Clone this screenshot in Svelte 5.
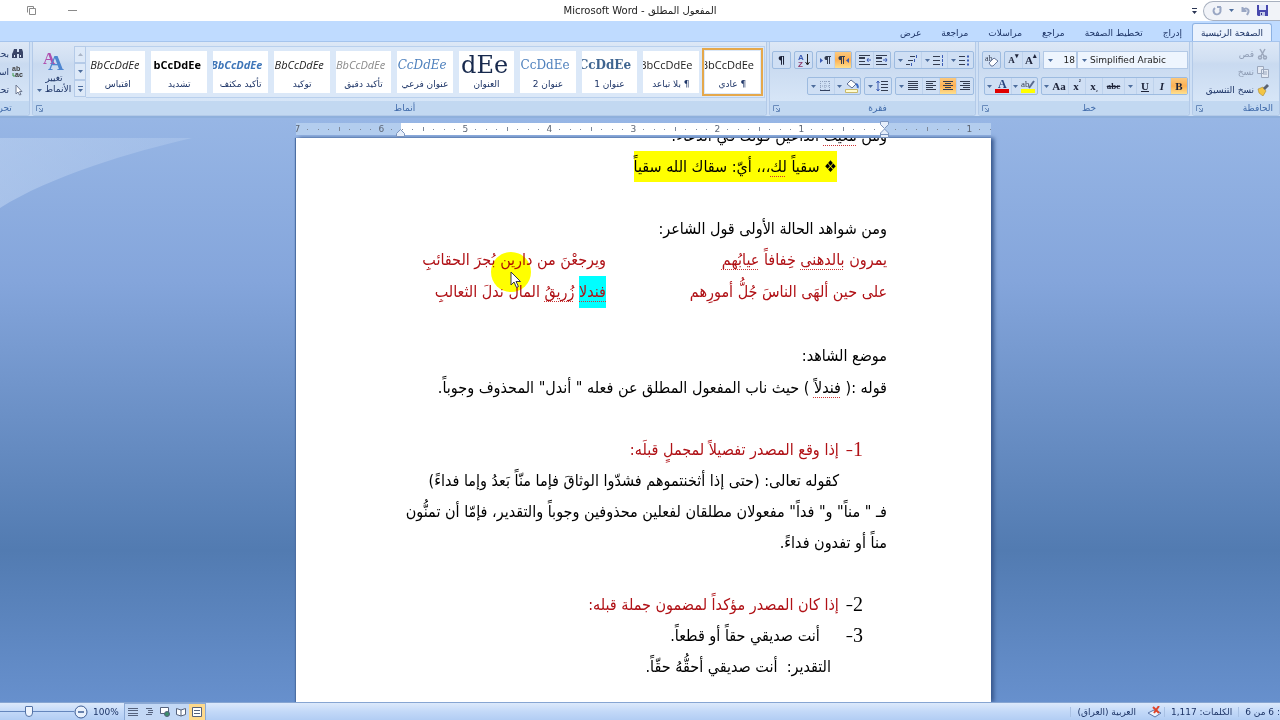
<script lang="ts">
  type StyleCard = { preview: string; label: string; kind: string };

  const tabs = ['الصفحة الرئيسية', 'إدراج', 'تخطيط الصفحة', 'مراجع', 'مراسلات', 'مراجعة', 'عرض'];

  const styleCards: StyleCard[] = [
    { preview: 'BbCcDdEe', label: '¶ عادي', kind: 'plain' },
    { preview: 'BbCcDdEe', label: '¶ بلا تباعد', kind: 'plain' },
    { preview: 'CcDdEe', label: 'عنوان 1', kind: 'heading1' },
    { preview: 'CcDdEe', label: 'عنوان 2', kind: 'heading2' },
    { preview: 'dEe', label: 'العنوان', kind: 'title' },
    { preview: 'CcDdEe', label: 'عنوان فرعي', kind: 'subtitle' },
    { preview: 'BbCcDdEe', label: 'تأكيد دقيق', kind: 'subtle' },
    { preview: 'BbCcDdEe', label: 'توكيد', kind: 'emphasis' },
    { preview: 'BbCcDdEe', label: 'تأكيد مكثف', kind: 'intense' },
    { preview: 'bCcDdEe', label: 'تشديد', kind: 'strong' },
    { preview: 'BbCcDdEe', label: 'اقتباس', kind: 'emphasis' },
  ];

  const rulerMarks = ['1', '', '1', '2', '3', '4', '5', '6', '7'];

  let activeTab = $state(0);
  let activeStyle = $state(0);
  let zoom = $state(38);
</script>

<svelte:head>
  <title>المفعول المطلق - Microsoft Word</title>
</svelte:head>

{#snippet arrow()}
  <svg class="arrow" width="5" height="3" viewBox="0 0 5 3"><path d="M0 0h5L2.500 3z" fill="#4c6c9c" /></svg>
{/snippet}

{#snippet launcher()}
  <button class="launcher" aria-label="المزيد من الخيارات">
    <svg width="7" height="7" viewBox="0 0 7 7" fill="none" stroke="#6a8cbc">
      <path d="M.5 6V.5H6M3 3l3 3M6.500 3v3.500H3" />
    </svg>
  </button>
{/snippet}

{#snippet lines(kind: string)}
  <svg width="12" height="12" viewBox="0 0 12 12" stroke="#333c50" fill="none">
    {#if kind === 'right'}
      <path d="M1 1.500h10M4 3.500h7M1 5.500h10M4 7.500h7M1 9.500h10" />
    {:else if kind === 'center'}
      <path d="M1 1.500h10M3 3.500h6M1 5.500h10M3 7.500h6M1 9.500h10" />
    {:else if kind === 'left'}
      <path d="M1 1.500h10M1 3.500h7M1 5.500h10M1 7.500h7M1 9.500h10" />
    {:else if kind === 'justify'}
      <path d="M1 1.500h10M1 3.500h10M1 5.500h10M1 7.500h10M1 9.500h10" />
    {:else if kind === 'bullets'}
      <path d="M0 2.500h6M0 6.500h6M0 10.500h6" /><path d="M8 2.500h2M8 6.500h2M8 10.500h2" stroke="#3b5bb5" stroke-width="2" />
    {:else if kind === 'numbers'}
      <path d="M0 2.500h7M0 6.500h7M0 10.500h7" /><path d="M9.500 1v3M9.500 5v3M9.500 9v3" stroke="#3b5bb5" />
    {:else if kind === 'levels'}
      <path d="M4 2.500h5M2 6.500h5M0 10.500h4" /><path d="M10.500 1v3M8.500 5v3M5.500 9v3" stroke="#3b5bb5" />
    {:else if kind === 'indent'}
      <path d="M0 1.500h11M0 4.500h6M0 7.500h6M0 10.500h11M0 3.500h6" /><path d="M12 6H8M9.500 4L8 6l1.500 2" stroke="#3b5bb5" />
    {:else if kind === 'outdent'}
      <path d="M0 1.500h11M0 4.500h6M0 7.500h6M0 10.500h11M0 3.500h6" /><path d="M7 6h4M9.500 4L11 6 9.500 8" stroke="#3b5bb5" />
    {:else}
      <path d="M5 1.500h7M5 4.500h7M5 7.500h7M5 10.500h7" /><path d="M2 1v10M.5 3L2 1l1.500 2M.5 9L2 11l1.500-2" stroke="#3b5bb5" />
    {/if}
  </svg>
{/snippet}

<div class="window" dir="rtl">
  <!-- شريط العنوان -->
  <header class="titlebar">
    <div class="quick">
      <div class="pill">
        <button aria-label="حفظ">
          <svg width="11" height="11" viewBox="0 0 11 11"><path d="M0 0h11v11H1L0 10z" fill="#4747ad" /><path d="M2 0h7v5H2z" fill="#e4e9fb" /><path d="M3 7h5v4H3z" fill="#c4cae8" /><path d="M4 8h1v2H4z" fill="#33338a" /></svg>
        </button>
        <button aria-label="تراجع">
          <svg width="9" height="10" viewBox="0 0 9 10" fill="none" stroke="#9aa7c4" stroke-width="2"><path d="M1.500 1v4h4M2 4.500c2-3.500 6-2 5.500 1.500L6 9" /></svg>
        </button>
        {@render arrow()}
        <button aria-label="تكرار">
          <svg width="10" height="10" viewBox="0 0 10 10" fill="none" stroke="#9aa7c4" stroke-width="2"><path d="M3 2a3.500 3.500 0 1 0 5 1M5 1h4M8.500 1v3" /></svg>
        </button>
      </div>
      <button class="customize" aria-label="تخصيص">
        <svg width="5" height="6" viewBox="0 0 5 6"><path d="M0 0h5v1H0zM0 3h5L2.500 6z" fill="#2b3554" /></svg>
      </button>
    </div>
    <h1>المفعول المطلق - <bdi>Microsoft Word</bdi></h1>
    <div class="window-buttons">
      <button aria-label="تصغير"><svg width="9" height="9" viewBox="0 0 9 9"><path d="M0 4.500h9" stroke="#8a8a8a" /></svg></button>
      <button aria-label="استعادة"><svg width="9" height="9" viewBox="0 0 9 9" fill="none" stroke="#8a8a8a"><path d="M2.500 2.500h6v6h-6zM.5 6.500v-6h6v2" /></svg></button>
    </div>
  </header>

  <!-- علامات التبويب -->
  <nav class="tabs">
    {#each tabs as tab, i}
      <button class="tab" class:active={activeTab === i} onclick={() => (activeTab = i)}>{tab}</button>
    {/each}
  </nav>

  <!-- الشريط -->
  <div class="ribbon">
    <section class="group clipboard">
      <div class="group-body">
        <button class="command off">
          <svg width="12" height="12" viewBox="0 0 12 12" fill="none" stroke="#9ca8bd" stroke-width="1.500"><path d="M3 1l4 7M8 1L4 8" /><circle cx="3" cy="9.500" r="1.500" /><circle cx="8" cy="9.500" r="1.500" /></svg>
          قص
        </button>
        <button class="command off">
          <svg width="12" height="12" viewBox="0 0 12 12" fill="#e4eaf4" stroke="#9ca8bd"><path d="M.5.5h6v7h-6zM4.500 3.500h7v8h-7zM6 6h4M6 8h4" /></svg>
          نسخ
        </button>
        <button class="command">
          <svg width="12" height="12" viewBox="0 0 12 12"><path d="M1 5l5-2 3 4-3 5-4-3z" fill="#f3c545" stroke="#9b7a2c" stroke-width=".5" /><path d="M6 4l4-4 2 2-4 4z" fill="#5b6372" /></svg>
          نسخ التنسيق
        </button>
      </div>
      <footer><span>الحافظة</span>{@render launcher()}</footer>
    </section>

    <section class="group font">
      <div class="group-body">
        <div class="row">
          <div class="combos">
            <div class="combo family" dir="ltr">
              {@render arrow()}
              <select aria-label="الخط"><option>Simplified Arabic</option></select>
            </div>
            <div class="combo size" dir="ltr">
              {@render arrow()}
              <select aria-label="حجم الخط"><option>18</option></select>
            </div>
          </div>
          <div class="set">
            <button class="tool glyph" aria-label="تكبير الخط">A<sup>▴</sup></button>
            <button class="tool glyph small" aria-label="تصغير الخط">A<sup>▾</sup></button>
          </div>
          <div class="set">
            <button class="tool" aria-label="مسح التنسيق">
              <svg width="14" height="13" viewBox="0 0 14 13"><text x="0" y="7" font-size="8" font-family="Liberation Serif" fill="#333c50">ab</text><path d="M4 9l5-5 4 3-5 5H6z" fill="#fff" stroke="#67779a" /></svg>
            </button>
          </div>
        </div>
        <div class="row">
          <div class="set">
            <button class="tool glyph on">B</button>
            <button class="tool glyph"><i>I</i></button>
            <button class="tool glyph"><u>U</u></button>
            <button class="tool narrow" aria-label="نمط التسطير">{@render arrow()}</button>
            <button class="tool glyph tiny"><s>abc</s></button>
            <button class="tool glyph">x<sub>₂</sub></button>
            <button class="tool glyph">x<sup>²</sup></button>
            <button class="tool glyph case">Aa {@render arrow()}</button>
          </div>
          <div class="set">
            <button class="tool wide" aria-label="لون التمييز">
              <svg width="15" height="14" viewBox="0 0 15 14"><text x="0" y="8" font-size="9" font-family="Liberation Serif" fill="#333c50">ab</text><path d="M8 9l5-7" stroke="#5a6b8f" stroke-width="2" /><path d="M0 10h14v4H0z" fill="#ff0" /></svg>
              {@render arrow()}
            </button>
            <button class="tool wide" aria-label="لون الخط">
              <svg width="15" height="14" viewBox="0 0 15 14"><text x="3" y="9" font-size="12" font-weight="bold" font-family="Liberation Serif" fill="#27447e">A</text><path d="M0 10h14v4H0z" fill="#e00000" /></svg>
              {@render arrow()}
            </button>
          </div>
        </div>
      </div>
      <footer><span>خط</span>{@render launcher()}</footer>
    </section>

    <section class="group paragraph">
      <div class="group-body">
        <div class="row">
          <div class="set">
            <button class="tool wide" aria-label="تعداد نقطي">{@render lines('bullets')}{@render arrow()}</button>
            <button class="tool wide" aria-label="تعداد رقمي">{@render lines('numbers')}{@render arrow()}</button>
            <button class="tool wide" aria-label="قائمة متعددة المستويات">{@render lines('levels')}{@render arrow()}</button>
          </div>
          <div class="set">
            <button class="tool" aria-label="إنقاص المسافة البادئة">{@render lines('outdent')}</button>
            <button class="tool" aria-label="زيادة المسافة البادئة">{@render lines('indent')}</button>
          </div>
          <div class="set">
            <button class="tool on" aria-label="من اليمين إلى اليسار">
              <svg width="13" height="9" viewBox="0 0 13 9"><path d="M3 0h5v1H7v7H6V1H5v7H4V4a2 2 0 0 1-1-4z" fill="#333c50" /><path d="M12 2v5L9 4.500z" fill="#3b5bb5" /></svg>
            </button>
            <button class="tool" aria-label="من اليسار إلى اليمين">
              <svg width="13" height="9" viewBox="0 0 13 9"><path d="M7 0h5v1h-1v7h-1V1H9v7H8V4a2 2 0 0 1-1-4z" fill="#333c50" /><path d="M1 2v5l3-2.500z" fill="#3b5bb5" /></svg>
            </button>
          </div>
          <div class="set">
            <button class="tool" aria-label="فرز">
              <svg width="12" height="14" viewBox="0 0 12 14"><text x="0" y="7" font-size="8" font-weight="bold" fill="#3b5bb5" font-family="Liberation Sans">A</text><text x="0" y="14" font-size="8" font-weight="bold" fill="#8c3a6b" font-family="Liberation Sans">Z</text><path d="M9.500 1v10M7.500 9l2 3 2-3" stroke="#222" fill="none" /></svg>
            </button>
          </div>
          <div class="set">
            <button class="tool pilcrow" aria-label="إظهار الكل">¶</button>
          </div>
        </div>
        <div class="row">
          <div class="set">
            <button class="tool" aria-label="محاذاة لليمين">{@render lines('right')}</button>
            <button class="tool on" aria-label="توسيط">{@render lines('center')}</button>
            <button class="tool" aria-label="محاذاة لليسار">{@render lines('left')}</button>
            <button class="tool wide" aria-label="ضبط">{@render lines('justify')}{@render arrow()}</button>
          </div>
          <div class="set">
            <button class="tool wide" aria-label="تباعد الأسطر">{@render lines('spacing')}{@render arrow()}</button>
          </div>
          <div class="set">
            <button class="tool wide" aria-label="تظليل">
              <svg width="14" height="14" viewBox="0 0 14 14"><path d="M2 5l4-4 5 4-4 4z" fill="#fff" stroke="#5f7196" /><path d="M11 5c2 1 2 3 1.500 4" stroke="#3b6bc5" stroke-width="2" fill="none" /><path d="M.5 10.500h12v3H.5z" fill="#fffbd0" stroke="#c9b96a" /></svg>
              {@render arrow()}
            </button>
            <button class="tool wide" aria-label="حدود">
              <svg width="12" height="12" viewBox="0 0 12 12" stroke="#8fa0bd" fill="none"><path d="M1.500 1v10M6 1v10M10.500 1v10M1 1.500h10M1 6h10" stroke-dasharray="1 1" /><path d="M1 10.500h10" stroke="#33415f" /></svg>
              {@render arrow()}
            </button>
          </div>
        </div>
      </div>
      <footer><span>فقرة</span>{@render launcher()}</footer>
    </section>

    <section class="group styles">
      <div class="group-body">
        <div class="gallery">
          {#each styleCards as card, i}
            <button class="card" class:chosen={activeStyle === i} onclick={() => (activeStyle = i)}>
              <span class="preview {card.kind}" dir="ltr"><span>{card.preview}</span></span>
              <span class="card-label">{card.label}</span>
            </button>
          {/each}
        </div>
        <div class="scroller">
          <button aria-label="السابق"><svg width="5" height="3" viewBox="0 0 5 3"><path d="M0 3h5L2.500 0z" fill="#a9b4c6" /></svg></button>
          <button aria-label="التالي">{@render arrow()}</button>
          <button aria-label="المزيد"><svg width="5" height="6" viewBox="0 0 5 6"><path d="M0 0h5v1H0zM0 3h5L2.500 6z" fill="#4c6c9c" /></svg></button>
        </div>
        <button class="change-styles">
          <svg width="22" height="24" viewBox="0 0 22 24" font-family="Liberation Serif" font-weight="bold">
            <text x="0" y="15" font-size="17" fill="#b04fae">A</text>
            <text x="5" y="21" font-size="22" fill="#4e86d0">A</text>
          </svg>
          <span>تغيير</span>
          <span>الأنماط {@render arrow()}</span>
        </button>
      </div>
      <footer><span>أنماط</span>{@render launcher()}</footer>
    </section>

    <section class="group editing">
      <div class="group-body">
        <button class="command">
          <svg width="12" height="12" viewBox="0 0 12 12"><path d="M1 4l1-3h3v3h2V1h3l1 3v6H7V6H5v4H0V6z" fill="#3a4568" /><path d="M2 7h1v2H2zM8 7h1v2H8z" fill="#dfe8f6" /></svg>
          بحث
        </button>
        <button class="command">
          <svg width="12" height="12" viewBox="0 0 12 12" font-family="Liberation Sans" font-weight="bold" font-size="7"><text x="0" y="5" fill="#444">ab</text><text x="3" y="11" fill="#333">ac</text><path d="M1 7v3h2" stroke="#3c9a46" fill="none" /></svg>
          استبدال
        </button>
        <button class="command">
          <svg width="12" height="12" viewBox="0 0 12 12"><path d="M4 1v9l2-2 1.500 3L9 10.500 7.500 7.500H10z" fill="#fff" stroke="#6c7891" /></svg>
          تحديد
        </button>
      </div>
      <footer><span>تحرير</span></footer>
    </section>
  </div>

  <!-- منطقة المستند -->
  <main class="workspace">
    <svg class="sweep" viewBox="0 0 190 70" preserveAspectRatio="none">
      <defs>
        <linearGradient id="sweep" x1="0" y1="0" x2="1" y2="0">
          <stop offset="0" stop-color="#c3d7f3" stop-opacity=".5" />
          <stop offset="1" stop-color="#c3d7f3" stop-opacity=".3" />
        </linearGradient>
      </defs>
      <path d="M0 0h190C130 14 50 38 0 70z" fill="url(#sweep)" />
    </svg>

    <div class="ruler">
      <div class="marks">
        {#each rulerMarks as mark}
          <div class="inch">
            <i></i><i></i><i></i><b>{mark}</b><i></i><i></i><i></i><i class="half"></i>
          </div>
        {/each}
      </div>
      <svg class="stop first" width="9" height="17" viewBox="0 0 9 17" fill="#e6eefa" stroke="#7b94bd"><path d="M.5.5h8v3l-4 4-4-4zM4.500 8l4 4v4.500h-8V12zM.5 13.500h8" /></svg>
      <svg class="stop last" width="9" height="8" viewBox="0 0 9 8" fill="#e6eefa" stroke="#7b94bd"><path d="M4.500.5l4 4v3h-8v-3z" /></svg>
    </div>

    <article class="page">
      <p class="line">ومن <span class="spell">مغيث</span> الداعين قولك في الدعاء:</p>
      <p class="line bulleted"><mark>❖ سقياً <span class="spell">لك</span>،،، أيّ: سقاك الله سقياً</mark></p>
      <p class="line">&nbsp;</p>
      <p class="line">ومن شواهد الحالة الأولى قول الشاعر:</p>
      <div class="verse">
        <p>يمرون <span class="spell">بالدهنى</span> خِفافاً <span class="spell">عيابُهم</span></p>
        <p>ويرجعْنَ من دارين بُجرَ الحقائبِ</p>
      </div>
      <div class="verse">
        <p>على حين ألهَى الناسَ جُلُّ أمورِهم</p>
        <p class="pointed">
          <mark class="cyan spell">فندلا</mark> <span class="spell">زُريقُ</span> المال ندلَ الثعالبِ
          <svg class="pointer" width="42" height="42" viewBox="0 0 42 42">
            <circle cx="21" cy="21" r="20" fill="#ffff00" />
          </svg>
          <svg class="cursor" width="12" height="18" viewBox="0 0 12 18"><path d="M1 1v13l3-3 2.500 5.500 2-1L6 10.500h4.500z" fill="#fff" stroke="#334" /></svg>
        </p>
      </div>
      <p class="line tall">&nbsp;</p>
      <p class="line tall">موضع الشاهد:</p>
      <p class="line">قوله :( <span class="spell">فندلاً</span> ) حيث ناب المفعول المطلق عن فعله " أندل" المحذوف وجوباً.</p>
      <p class="line">&nbsp;</p>
      <p class="line item red"><span class="number">1</span><span>–</span><span class="body">إذا وقع المصدر تفصيلاً لمجملٍ قبلَه:</span></p>
      <p class="line quote">كقوله تعالى: (حتى إذا أثخنتموهم فشدّوا الوثاقَ فإما منّاً بَعدُ وإما فداءً)</p>
      <p class="line">فـ " مناً" و" فداً" مفعولان مطلقان لفعلين محذوفين وجوباً والتقدير، فإمّا أن تمنُّون</p>
      <p class="line">مناً أو تفدون فداءً.</p>
      <p class="line">&nbsp;</p>
      <p class="line item red"><span class="number black">2</span><span class="black">–</span><span class="body">إذا كان المصدر مؤكداً لمضمون جملة قبله:</span></p>
      <p class="line item"><span class="number">3</span><span>–</span><span class="body far">أنت صديقي حقاً أو قطعاً.</span></p>
      <p class="line estimate">التقدير:&nbsp; أنت صديقي أحقُّهُ حقّاً.</p>
    </article>
  </main>

  <!-- شريط الحالة -->
  <footer class="status">
    <span class="cell">: 6 من 6</span>
    <span class="cell">الكلمات: 1,117</span>
    <button class="proof" aria-label="التدقيق">
      <svg width="14" height="12" viewBox="0 0 14 12"><path d="M0 7l6-3 7 3-6 4z" fill="#eef3fc" stroke="#5975a8" /><path d="M5 1l6 6M11 0L6 7" stroke="#e0452a" stroke-width="2" /></svg>
    </button>
    <span class="cell">العربية (العراق)</span>
    <div class="views">
      <button class="on" aria-label="تخطيط الطباعة"><svg width="10" height="10" viewBox="0 0 10 10" fill="#fff" stroke="#55627d"><path d="M.5.5h9v9h-9zM2 3.500h6M2 6.500h6" /></svg></button>
      <button aria-label="قراءة"><svg width="10" height="10" viewBox="0 0 10 10" fill="#fff" stroke="#55627d"><path d="M.5 1.500L5 3l4.500-1.500v6L5 9 .5 7.500zM5 3v6" /></svg></button>
      <button aria-label="ويب"><svg width="10" height="10" viewBox="0 0 10 10" fill="#fff" stroke="#55627d"><path d="M.5.5h8v6h-8z" /><circle cx="7" cy="7" r="2.500" fill="#3c8f6a" /></svg></button>
      <button aria-label="مخطط"><svg width="10" height="10" viewBox="0 0 10 10" stroke="#55627d"><path d="M2 1.500h6M4 3.500h5M4 5.500h5M2 7.500h6" /></svg></button>
      <button aria-label="مسودة"><svg width="10" height="10" viewBox="0 0 10 10" stroke="#55627d"><path d="M0 1.500h10M0 3.500h10M0 6.500h10M0 8.500h10" /></svg></button>
    </div>
    <button class="percent">100%</button>
    <button class="minus" aria-label="تصغير العرض">
      <svg width="14" height="14" viewBox="0 0 14 14" fill="#e9f1fc" stroke="#3d5c94"><circle cx="7" cy="7" r="6" /><path d="M4 7h6" stroke-width="1.500" /></svg>
    </button>
    <input class="zoom" type="range" dir="ltr" min="0" max="100" bind:value={zoom} aria-label="تكبير/تصغير" />
  </footer>
</div>

<style>
  :global(body) {
    margin: 0;
  }

  .window {
    display: flex;
    flex-direction: column;
    height: 100vh;
    overflow: hidden;
    font-family: 'DejaVu Sans', sans-serif;
    font-size: 9px;
    color: #1e3567;
    background: #fff;
  }

  button,
  select {
    margin: 0;
    padding: 0;
    border: none;
    background: none;
    font: inherit;
    color: inherit;
  }

  p,
  h1 {
    margin: 0;
  }

  svg {
    direction: ltr;
  }

  .arrow {
    flex: none;
  }

  /* --- شريط العنوان --- */
  .titlebar {
    display: grid;
    grid-template-columns: 1fr auto 1fr;
    align-items: center;
    height: 21px;
    flex: none;
  }

  .titlebar h1 {
    font-size: 10px;
    font-weight: normal;
    color: #222;
  }

  .quick {
    display: flex;
    align-items: center;
    gap: 6px;
  }

  .pill {
    display: flex;
    align-items: center;
    gap: 7px;
    height: 18px;
    padding: 0 12px 0 8px;
    border: 1px solid #a8b0bf;
    border-right: none;
    border-radius: 10px 0 0 10px;
    background: #f1f3f8;
  }

  .pill button,
  .customize,
  .window-buttons button {
    display: flex;
  }

  .window-buttons {
    display: flex;
    justify-content: flex-end;
    gap: 32px;
    padding-left: 27px;
  }

  /* --- علامات التبويب --- */
  .tabs {
    display: flex;
    flex: none;
    height: 20px;
    padding-right: 8px;
    background: #bfdbff;
  }

  .tab {
    padding: 4px 10px 0;
  }

  .tab.active {
    margin-top: 2px;
    padding: 0 8px;
    border: 1px solid #8db2e3;
    border-bottom: none;
    border-radius: 3px 3px 0 0;
    background: #eaf2fd;
  }

  /* --- الشريط --- */
  .ribbon {
    display: flex;
    flex: none;
    gap: 2px;
    height: 74px;
    border-top: 1px solid #a5c4ed;
    border-bottom: 2px solid #8fb0dc;
    background: #cfe0f5;
  }

  .group {
    display: flex;
    flex-direction: column;
    box-sizing: border-box;
    border: 1px solid #b3cae8;
    border-top: none;
    border-radius: 0 0 3px 3px;
    background: linear-gradient(#dde8f6 0%, #d0dff2 25%, #c9daf0 30%, #dceafa 100%);
    overflow: hidden;
  }

  .group-body {
    flex: 1;
  }

  .group footer {
    display: flex;
    align-items: center;
    height: 14px;
    padding-left: 3px;
    background: #c2d8f1;
    color: #3f6aaa;
  }

  .group footer span {
    flex: 1;
    text-align: center;
  }

  .launcher {
    display: flex;
  }

  .clipboard {
    width: 88px;
  }

  .clipboard .group-body,
  .editing .group-body {
    display: flex;
    flex-direction: column;
    justify-content: center;
    gap: 6px;
    padding-right: 10px;
  }

  .clipboard footer span {
    text-align: right;
    padding-right: 6px;
  }

  .command {
    display: flex;
    align-items: center;
    gap: 3px;
    height: 12px;
    white-space: nowrap;
  }

  .command svg {
    flex: none;
  }

  .command.off {
    color: #8d9bb3;
  }

  .font {
    width: 212px;
  }

  .font .group-body,
  .paragraph .group-body {
    display: flex;
    flex-direction: column;
    gap: 8px;
    padding: 9px 1px 0;
  }

  .row {
    display: flex;
    gap: 3px;
  }

  .combos {
    display: flex;
  }

  .combo {
    display: flex;
    align-items: center;
    box-sizing: border-box;
    height: 18px;
    padding-left: 4px;
    border: 1px solid #b3c9e6;
    background: #eef5fe;
  }

  .combo select {
    flex: 1;
    appearance: none;
    padding-left: 3px;
    outline: none;
    color: #222;
  }

  .family {
    width: 111px;
  }

  .size {
    width: 34px;
  }

  .size select {
    text-align: right;
    text-align-last: right;
    padding-right: 1px;
  }

  .set {
    display: flex;
    box-sizing: border-box;
    height: 18px;
    border: 1px solid #9dbbe0;
    border-radius: 2px;
    background: #cfdff4;
  }

  .tool {
    display: flex;
    align-items: center;
    justify-content: center;
    gap: 3px;
    width: 17px;
    border-left: 1px solid #bed2ec;
    color: #1c2238;
  }

  .tool:last-child {
    border-left: none;
  }

  .tool.wide {
    width: 26px;
  }

  .tool.narrow {
    width: 12px;
  }

  .tool.on {
    background: linear-gradient(#fbc97e, #fdb053 50%, #fee08f);
  }

  .glyph {
    direction: ltr;
    gap: 0;
    font: bold 11px 'Liberation Serif', serif;
  }

  .glyph sup,
  .glyph sub {
    font-size: 7px;
    align-self: flex-start;
    line-height: 9px;
  }

  .glyph sub {
    align-self: flex-end;
  }

  .glyph.small,
  .glyph.tiny {
    font-size: 9px;
  }

  .glyph.tiny {
    width: 22px;
  }

  .tool.case {
    flex-direction: row-reverse;
    gap: 3px;
    width: 26px;
  }

  .tool.pilcrow {
    font-size: 11px;
    font-weight: bold;
  }

  .paragraph {
    width: 207px;
  }

  .styles {
    flex: 1;
    min-width: 0;
  }

  .styles .group-body {
    display: flex;
    align-items: center;
    padding: 0 1px;
  }

  .gallery {
    display: grid;
    grid-template-columns: repeat(11, minmax(0, 1fr));
    gap: 6px;
    flex: 1;
    min-width: 0;
    padding: 4px 4px;
    border: 1px solid #b9d0ed;
    border-left: none;
    background: #dbe8f8;
  }

  .card {
    display: flex;
    flex-direction: column;
    height: 42px;
    background: #fff;
    overflow: hidden;
  }

  .card.chosen {
    outline: 2px solid #e5a84b;
    outline-offset: 1px;
  }

  .preview {
    display: flex;
    align-items: center;
    justify-content: flex-end;
    width: 50px;
    height: 28px;
    margin-right: 6px;
    overflow: hidden;
    font: 11px 'Open Sans', sans-serif;
    color: #222;
  }

  .card-label {
    width: 100%;
    text-align: center;
    white-space: nowrap;
  }

  .heading1,
  .heading2,
  .subtitle,
  .title {
    font-family: 'DejaVu Serif', serif;
    font-size: 12px;
    color: #3f6590;
  }

  .heading1 {
    font-weight: bold;
  }

  .heading2 {
    color: #4f81bd;
  }

  .title {
    font-size: 24px;
    color: #17294d;
  }

  .subtitle {
    font-style: italic;
    color: #4f81bd;
  }

  .subtle {
    font-style: italic;
    color: #8a8a8a;
  }

  .emphasis {
    font-style: italic;
  }

  .intense {
    font-style: italic;
    font-weight: bold;
    color: #3f76b8;
  }

  .strong {
    font-weight: bold;
    color: #000;
  }

  .scroller {
    display: flex;
    flex-direction: column;
    width: 12px;
  }

  .scroller button {
    display: flex;
    align-items: center;
    justify-content: center;
    box-sizing: border-box;
    height: 17px;
    border: 1px solid #b5cbe8;
    background: #dde9f8;
  }

  .change-styles {
    display: flex;
    flex-direction: column;
    align-items: center;
    width: 40px;
    line-height: 11px;
    white-space: nowrap;
  }

  .editing {
    flex: none;
    width: 60px;
    margin-left: -30px;
  }

  .editing .group-body {
    padding-right: 5px;
  }

  .editing footer span {
    white-space: nowrap;
  }

  /* --- منطقة المستند --- */
  .workspace {
    position: relative;
    display: flex;
    flex-direction: column;
    align-items: center;
    flex: 1;
    min-height: 0;
    padding: 5px 0 0 7px;
    background: linear-gradient(#97b6e5, #84a5db 28%, #527bb1 74%, #6790cd);
    overflow: hidden;
  }

  .sweep {
    position: absolute;
    left: 0;
    top: 20px;
    width: 15%;
    height: 70px;
  }

  .ruler {
    position: relative;
    width: 695px;
    max-width: 100%;
    height: 12px;
    margin-bottom: 3px;
    flex: none;
    background: linear-gradient(to left, #b3cdee 106px, #fff 106px 590px, #b3cdee 590px);
  }

  .marks {
    display: flex;
    height: 100%;
    overflow: hidden;
  }

  .inch {
    display: grid;
    grid-template-columns: repeat(8, 1fr);
    flex: none;
    width: 84px;
    align-items: center;
    justify-items: center;
  }

  .inch:first-child {
    margin-right: -15px;
  }

  .inch i {
    width: 1px;
    height: 1px;
    background: #7c8798;
  }

  .inch i.half {
    height: 4px;
  }

  .inch b {
    font-weight: normal;
    line-height: 12px;
    color: #5d6675;
  }

  .stop {
    position: absolute;
  }

  .stop.first {
    right: 102px;
    top: -2px;
  }

  .stop.last {
    right: 586px;
    top: 6px;
  }

  .page {
    box-sizing: border-box;
    width: 695px;
    max-width: 100%;
    flex: 1;
    min-height: 0;
    padding: 0 104px 0 64px;
    background: #fff;
    box-shadow: 3px 0 4px #38588e, -1px 0 1px #4f70a5;
    overflow: hidden;
    font-family: 'DejaVu Sans Condensed', 'DejaVu Sans', sans-serif;
    font-size: 16px;
    color: #000;
  }

  .line {
    height: 31px;
    line-height: 31px;
    white-space: nowrap;
  }

  .line:first-child {
    margin-top: -18px;
  }

  .line.tall,
  .verse {
    height: 32px;
    line-height: 32px;
  }

  .bulleted {
    padding-right: 50px;
  }

  mark {
    display: inline-block;
    background: #ff0;
    color: inherit;
  }

  mark.cyan {
    background: #0ff;
  }

  .spell {
    text-decoration: underline dotted #c33 1px;
    text-underline-offset: 4px;
  }

  .verse {
    display: grid;
    grid-template-columns: 281px 1fr;
    color: #b01116;
    white-space: nowrap;
  }

  .pointed {
    position: relative;
  }

  .pointer {
    position: absolute;
    right: 74px;
    top: -25px;
    mix-blend-mode: multiply;
  }

  .cursor {
    position: absolute;
    right: 84px;
    top: -5px;
  }

  .red {
    color: #b01116;
  }

  .black {
    color: #000;
  }

  .item {
    display: flex;
    padding-right: 24px;
  }

  .number {
    font-family: 'Liberation Serif', serif;
    font-size: 20px;
  }

  .body {
    padding-right: 7px;
  }

  .body.far {
    padding-right: 26px;
  }

  .quote {
    padding-right: 48px;
  }

  .estimate {
    padding-right: 56px;
  }

  /* --- شريط الحالة --- */
  .status {
    display: flex;
    align-items: center;
    flex: none;
    height: 17px;
    border-top: 1px solid #86a5d2;
    background: linear-gradient(#dce9fb, #c3d9f8 50%, #b2cdf4);
  }

  .cell {
    padding: 0 6px;
    border-left: 1px solid #a9c1e4;
    white-space: nowrap;
  }

  .cell:first-child {
    padding-right: 0;
  }

  .proof {
    display: flex;
    padding: 0 2px 0 6px;
  }

  .views {
    display: flex;
    margin-right: auto;
    border: 1px solid #8aa8d4;
    background: #c3d8f5;
  }

  .views button {
    display: flex;
    align-items: center;
    justify-content: center;
    width: 16px;
    height: 16px;
  }

  .views .on {
    background: #fdd98c;
  }

  .percent {
    padding: 0 5px;
  }

  .minus {
    display: flex;
  }

  .zoom {
    appearance: none;
    width: 74px;
    height: 12px;
    margin: 0;
    background: linear-gradient(#6486bd, #6486bd) center / 100% 1px no-repeat;
  }

  .zoom::-webkit-slider-thumb {
    appearance: none;
    width: 8px;
    height: 11px;
    border: 1px solid #5473a6;
    border-radius: 1px 1px 4px 4px;
    background: #eef4fd;
  }
</style>
